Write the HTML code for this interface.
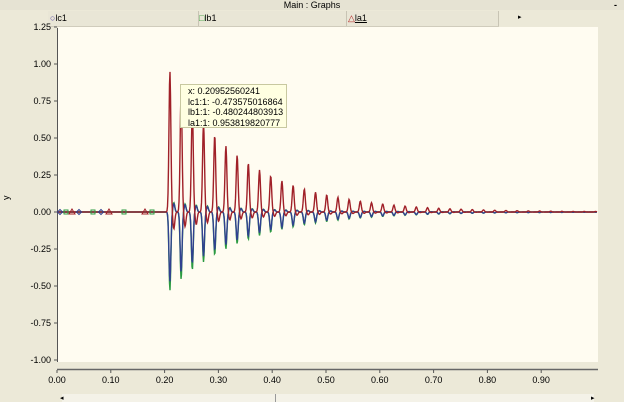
<!DOCTYPE html><html><head><style>
body{margin:0;width:624px;height:402px;background:#ece9d8;font-family:"Liberation Sans",sans-serif;font-size:9px;color:#000;position:relative;overflow:hidden}
.a{position:absolute}
</style></head><body>
<div class="a" style="left:0;top:0;width:624px;height:10px;background:#e6e3d3;text-align:center;line-height:10px;font-size:9px">Main : Graphs</div>
<div class="a" style="left:614px;top:0;font-size:9px;font-weight:bold">-</div>
<div class="a" style="left:48px;top:11px;width:451px;height:15px;background:#e9e6d6;border-bottom:1px solid #d0ccbc"></div>
<div class="a" style="left:198px;top:11px;width:1px;height:15px;background:#c8c4b4"></div>
<div class="a" style="left:346px;top:11px;width:1px;height:15px;background:#c8c4b4"></div>
<div class="a" style="left:498px;top:11px;width:1px;height:15px;background:#c8c4b4"></div>
<div class="a" style="left:50px;top:13px"><span style="color:#5040a0">○</span>lc1</div>
<div class="a" style="left:199px;top:13px"><span style="color:#2a9a30">□</span>lb1</div>
<div class="a" style="left:348px;top:13px"><span style="color:#b02020">△</span><u>la1</u></div>
<div class="a" style="left:518px;top:13px;font-size:7px">▸</div>
<div class="a" style="left:58px;top:27px;width:540px;height:335px;background:#fffcf1"></div>
<svg class="a" style="left:0;top:0" width="624" height="402">
<g font-family="Liberation Sans" font-size="9" text-anchor="end" id="yl"></g>
<line x1="57.5" y1="28" x2="57.5" y2="362" stroke="#555"/>
<line x1="57" y1="369.5" x2="598" y2="369.5" stroke="#666" stroke-width="1.5"/>
<g id="xl" font-family="Liberation Sans" font-size="9" text-anchor="middle"></g>
<text x="6" y="203" font-family="Liberation Sans" font-size="9" transform="rotate(-90 6 200)">y</text>
<g id="plot"></g>
</svg>
<div class="a" style="left:180px;top:84px;width:107px;height:44px;background:#ffffe1;border:1px solid #c8c8a0;font-size:9px;line-height:10.5px;padding:1px 0 0 7px;box-sizing:border-box">x: 0.20952560241<br>lc1:1: -0.473575016864<br>lb1:1: -0.480244803913<br>la1:1: 0.953819820777</div>
<div class="a" style="left:62px;top:394px;width:532px;height:8px;background:#f4f2e8"></div>
<div class="a" style="left:275px;top:394px;width:1px;height:8px;background:#999"></div>
<div class="a" style="left:60px;top:394px;font-size:7px">◂</div>
<div class="a" style="left:591px;top:394px;font-size:7px">▸</div>
<script>
var ns="http://www.w3.org/2000/svg";
function el(t,a,p,txt){var e=document.createElementNS(ns,t);for(var k in a)e.setAttribute(k,a[k]);if(txt)e.textContent=txt;p.appendChild(e);return e}
var yl=document.getElementById('yl'),xl=document.getElementById('xl'),pl=document.getElementById('plot');
function Y(v){return 212-v*148}
for(var v=1.25;v>=-1.001;v-=0.25){var y=Y(v);el('text',{x:51,y:y+3},yl,v.toFixed(2));el('line',{x1:54,y1:y,x2:57,y2:y,stroke:'#555'},yl)}
function X(t){return 57+t*538}
for(var i=0;i<10;i++){var x=X(i/10);el('text',{x:x,y:383},xl,(i/10).toFixed(2));el('line',{x1:x,y1:370,x2:x,y2:373,stroke:'#555'},xl)}
function series(amp,col,w){var d='M57 '+Y(0);for(var x=57;x<=597;x+=0.5){var v=0;if(x>=166){var k=(x-166)/11.2,n=Math.floor(k),f=k-n;var A=amp*Math.pow(0.86,n);v=A*Math.exp(-Math.pow((f-0.35)/0.12,2))-amp*0.12*Math.pow(0.86,n)*Math.exp(-Math.pow((f-0.7)/0.12,2));}d+=' L'+x+' '+Y(v).toFixed(1)}el('path',{d:d,fill:'none',stroke:col,'stroke-width':w},pl)}
series(-0.53,'#2a9a40',1.4);series(-0.47,'#304090',1.4);series(0.95,'#a02028',1.4);
el('line',{x1:57,y1:212,x2:166,y2:212,stroke:'#8a3030'},pl);
var mk=[[60,'d'],[66,'s'],[72,'t'],[79,'d'],[93,'s'],[101,'d'],[109,'t'],[124,'s'],[145,'t'],[152,'s']];
mk.forEach(function(m){var x=m[0],y=212;if(m[1]=='s')el('rect',{x:x-2,y:y-2,width:4,height:4,fill:'none',stroke:'#2a9a40'},pl);else if(m[1]=='t')el('path',{d:'M'+x+' '+(y-3)+'L'+(x+3)+' '+(y+2)+'L'+(x-3)+' '+(y+2)+'Z',fill:'none',stroke:'#a02028'},pl);else el('path',{d:'M'+x+' '+(y-2.5)+'L'+(x+2.5)+' '+y+'L'+x+' '+(y+2.5)+'L'+(x-2.5)+' '+y+'Z',fill:'none',stroke:'#304090'},pl)});
</script>
</body></html>
